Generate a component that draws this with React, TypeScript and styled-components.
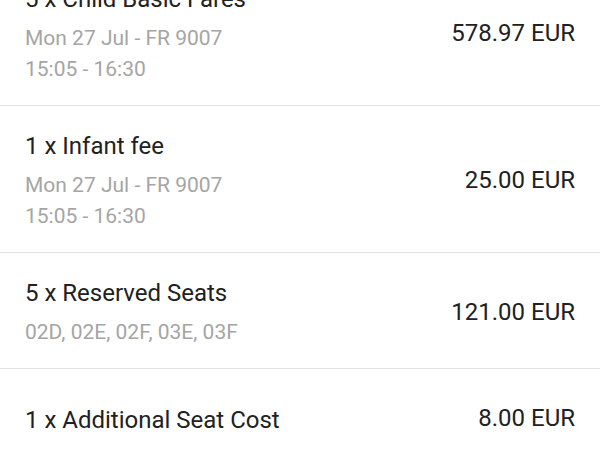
import React from 'react'
import styled, { createGlobalStyle } from 'styled-components'

const GlobalStyle = createGlobalStyle`
  html, body {
    margin: 0;
    padding: 0;
    background: #fff;
    overflow: hidden;
  }
  body {
    font-family: Roboto, 'Liberation Sans', sans-serif;
    -webkit-font-smoothing: antialiased;
  }
`

const List = styled.div`
  display: flex;
  flex-direction: column;
  margin-top: -41px;
`

const Row = styled.div<{ $top?: number }>`
  display: flex;
  align-items: center;
  justify-content: space-between;
  padding: ${(p) => p.$top ?? 26}px 25px 20px 25px;
  border-bottom: 1px solid #e2e2e2;
`

const Info = styled.div`
  display: flex;
  flex-direction: column;
`

const Title = styled.div`
  font-size: 24px;
  line-height: 28px;
  color: #212121;
`

const Details = styled.div`
  margin-top: 10px;
  font-size: 21px;
  line-height: 31px;
  color: #a5a5a5;
`

const Price = styled.div`
  margin: -2px 0 2px;
  font-size: 24px;
  line-height: 28px;
  color: #212121;
  white-space: nowrap;
`

type Item = {
  title: string
  details: string[]
  price: string
}

const items: Item[] = [
  {
    title: '5 x Child Basic Fares',
    details: ['Mon 27 Jul - FR 9007', '15:05 - 16:30'],
    price: '578.97 EUR'
  },
  {
    title: '1 x Infant fee',
    details: ['Mon 27 Jul - FR 9007', '15:05 - 16:30'],
    price: '25.00 EUR'
  },
  {
    title: '5 x Reserved Seats',
    details: ['02D, 02E, 02F, 03E, 03F'],
    price: '121.00 EUR'
  },
  {
    title: '1 x Additional Seat Cost',
    details: [],
    price: '8.00 EUR'
  }
]

export default function App() {
  return (
    <>
      <GlobalStyle />
      <List>
        {items.map((item, i) => (
          <Row key={i} $top={item.details.length ? 26 : 37}>
            <Info>
              <Title>{item.title}</Title>
              {item.details.length > 0 && (
                <Details>
                  {item.details.map((d) => (
                    <div key={d}>{d}</div>
                  ))}
                </Details>
              )}
            </Info>
            <Price>{item.price}</Price>
          </Row>
        ))}
      </List>
    </>
  )
}
